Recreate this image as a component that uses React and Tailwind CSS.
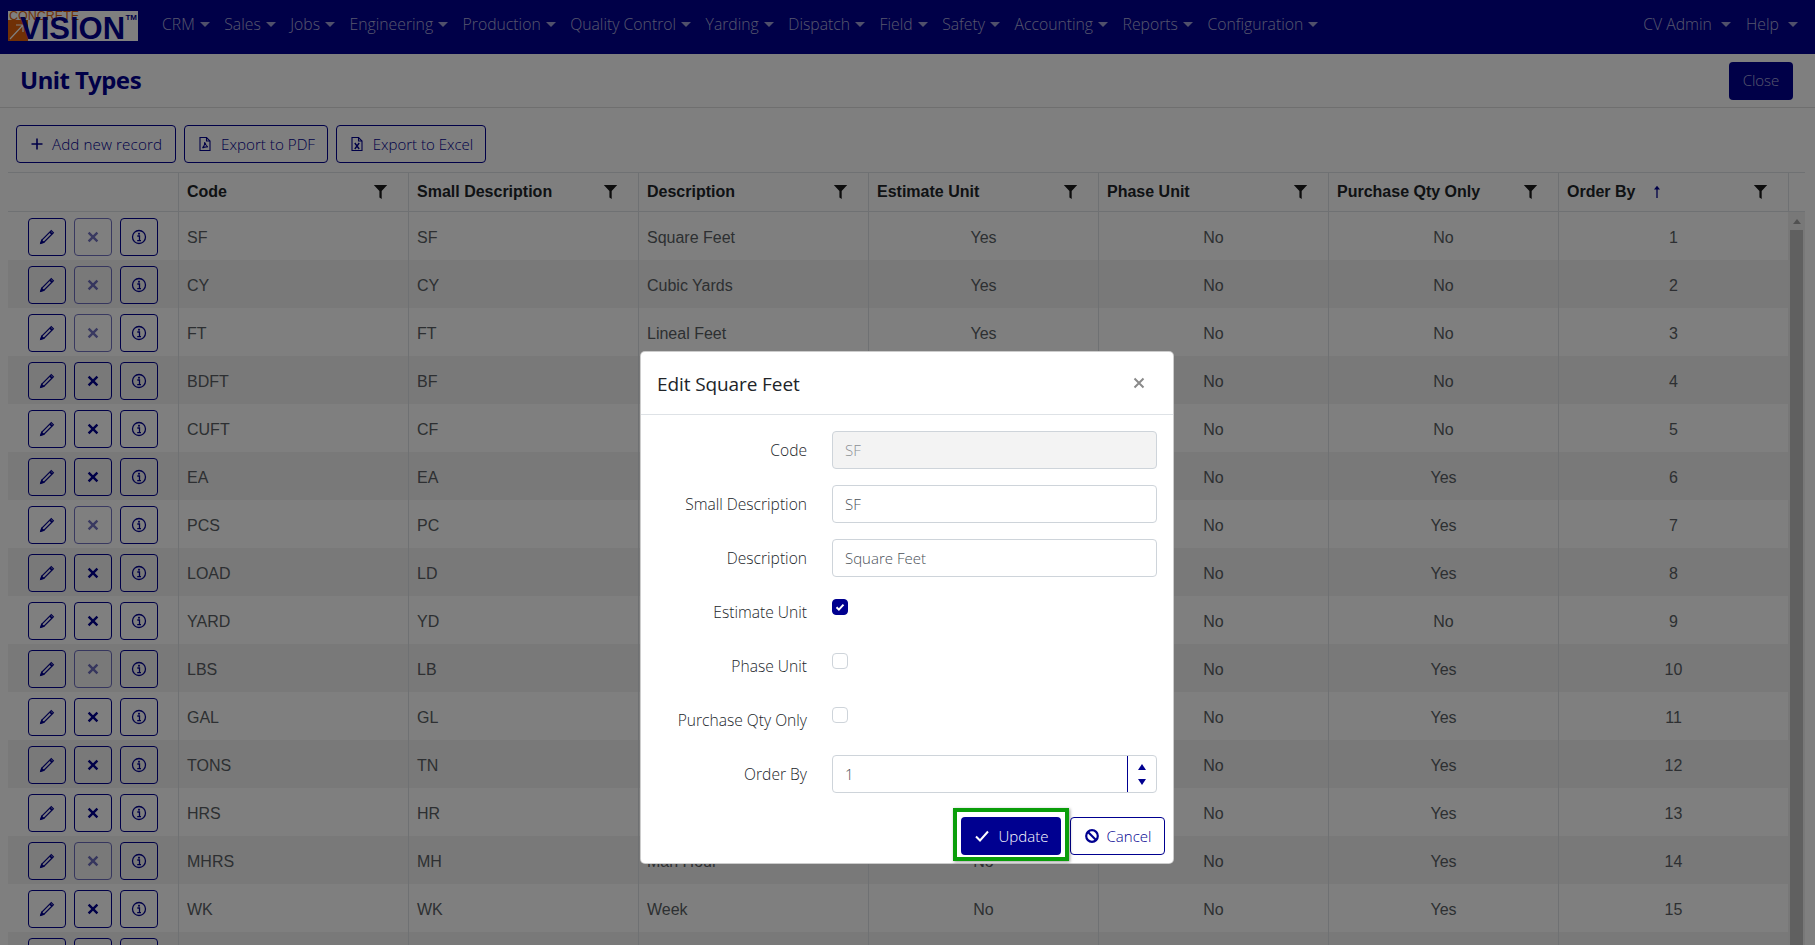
import React from "react";

const navItems = ["CRM","Sales","Jobs","Engineering","Production","Quality Control","Yarding","Dispatch","Field","Safety","Accounting","Reports","Configuration"];
const columns = ["Code","Small Description","Description","Estimate Unit","Phase Unit","Purchase Qty Only","Order By"];
const rows = [
  ["SF","SF","Square Feet","Yes","No","No",1,true],
  ["CY","CY","Cubic Yards","Yes","No","No",2,true],
  ["FT","FT","Lineal Feet","Yes","No","No",3,true],
  ["BDFT","BF","Board Feet","Yes","No","No",4,false],
  ["CUFT","CF","Cubic Feet","Yes","No","No",5,false],
  ["EA","EA","Each","Yes","No","Yes",6,false],
  ["PCS","PC","Pieces","Yes","No","Yes",7,true],
  ["LOAD","LD","Load","Yes","No","Yes",8,false],
  ["YARD","YD","Yard","Yes","No","No",9,false],
  ["LBS","LB","Pounds","Yes","No","Yes",10,true],
  ["GAL","GL","Gallons","Yes","No","Yes",11,false],
  ["TONS","TN","Tons","Yes","No","Yes",12,false],
  ["HRS","HR","Hour","No","No","Yes",13,false],
  ["MHRS","MH","Man Hour","No","No","Yes",14,true],
  ["WK","WK","Week","No","No","Yes",15,false],
  ["","","","","","",16,false],
];

const Caret = () => <span className="inline-block ml-[5px] w-0 h-0 border-x-[5px] border-x-transparent border-t-[5.5px] border-t-[#ffffffa0] relative top-[-3px]" />;
const Pencil = () => (
  <svg width="16" height="16" viewBox="0 0 16 16" fill="none" stroke="#000090" strokeWidth="1.200">
    <path d="M12.300 1.600l2.100 2.100L5.200 12.900l-3.300 1.200 1.200-3.300z" />
    <path d="M1.700 14.300l.9-3 2.100 2.100z" fill="#000090" />
    <path d="M11 3l2.100 2.100" strokeWidth="1.800" />
  </svg>
);
const XIcon = () => (
  <svg width="16" height="16" viewBox="0 0 16 16" stroke="#000090" strokeWidth="2.400"><path d="M3.600 3.600l8.800 8.800M12.400 3.600l-8.800 8.800" /></svg>
);
const Info = () => (
  <svg width="16" height="16" viewBox="0 0 16 16" fill="none" stroke="#000090">
    <circle cx="8" cy="8" r="6.500" strokeWidth="1.300" />
    <path d="M6.300 7h2.200v4.400M6.200 11.600h3.800" strokeWidth="1.300" />
    <rect x="7.100" y="3.800" width="1.800" height="1.800" fill="#000090" stroke="none" />
  </svg>
);
const Filter = () => (
  <svg width="15" height="16" viewBox="0 0 15 16" fill="#1a1a1a"><path d="M.8 1h13.400L8.700 7v8l-2.300-1.500V7z" /></svg>
);
const SortUp = () => (
  <svg width="12" height="14" viewBox="0 0 12 14" fill="none" stroke="#000090" strokeWidth="1.300"><path d="M6 13V2" /><path d="M6 .8L9 4.600H3z" fill="#000090" stroke="none" /></svg>
);
const Plus = () => (
  <svg width="14" height="14" viewBox="0 0 14 14" stroke="#000090" strokeWidth="1.600"><path d="M7 1.500v11M1.500 7h11" /></svg>
);
const FileIcon = ({ children }) => (
  <svg width="16" height="16" viewBox="0 0 16 16" fill="none" stroke="#000090" strokeWidth="1.100">
    <path d="M3 1.500h6.500L13 5v9.500H3z" />
    <path d="M9.500 1.500V5H13" />
    {children}
  </svg>
);

const ActionBtn = ({ children, faded }) => (
  <button className={`w-[38px] h-[38px] flex items-center justify-center rounded border border-[#000090] ${faded ? "opacity-55" : ""}`}>{children}</button>
);
const ToolBtn = ({ icon, label, w, size }) => (
  <button className={`h-[38px] ${w} ${size} flex items-center justify-center gap-[8px] rounded border border-[#000090] text-[#000090] font-light`}>
    {icon}<span>{label}</span>
  </button>
);

const Field = ({ label, children }) => (
  <div className="flex items-center h-[38px] mb-[16px]">
    <label className="w-[166px] text-right text-[15.600px] text-[#212529] font-light shrink-0 relative top-[1px]">{label}</label>
    <div className="ml-[25px] w-[325px]">{children}</div>
  </div>
);
const Input = ({ value, disabled }) => (
  <div className={`h-[38px] w-full border border-[#ced4da] rounded flex items-center px-[12px] text-[15px] font-light ${disabled ? "bg-[#f3f3f3] text-[#8a8f94]" : "bg-white text-[#495057]"}`}>{value}</div>
);
const Check = ({ on }) => (
  <div className="h-[38px] flex items-start pt-[6px]">
    <div className={`w-[16px] h-[16px] rounded-[4px] border flex items-center justify-center ${on ? "bg-[#000090] border-[#000090]" : "bg-white border-[#ced4da]"}`}>
      {on && <svg width="10" height="10" viewBox="0 0 10 10" fill="none" stroke="#fff" strokeWidth="2"><path d="M1.500 5.200l2.400 2.400 4.600-5" /></svg>}
    </div>
  </div>
);

export default function App() {
  return (
    <div className="relative h-screen overflow-hidden bg-white font-['Open_Sans',sans-serif]">
      <nav className="h-[54px] bg-[#000090] flex items-center pl-[8px] pr-[17px]">
        <div className="relative w-[130px] h-[30px] bg-white overflow-hidden shrink-0 top-[-1px]">
          <div className="absolute left-0 top-[9px] w-[20px] h-[21px] bg-[#e0600c]">
            <svg width="20" height="21" viewBox="0 0 20 21" fill="none" stroke="#fff" strokeWidth="1.200"><path d="M2 19L15 5M8 5h7v7" /></svg>
          </div>
          <span className="absolute left-[1px] top-[-2px] text-[12.500px] leading-[14px] text-[#e0600c] font-['Liberation_Sans',sans-serif]">CONCRETE</span>
          <span className="absolute left-[12px] top-[3px] text-[31px] leading-[30px] font-bold text-[#000090] font-['Liberation_Sans',sans-serif]">VISION</span>
          <span className="absolute right-[1px] top-[2px] text-[8px] leading-[10px] font-bold text-[#000090] font-['Liberation_Sans',sans-serif]">TM</span>
        </div>
        <div className="flex ml-[24px] gap-[14.500px] pb-[4px] text-[15.750px] font-light text-[#ffffffb0]">
          {navItems.map((n) => <span key={n} className="whitespace-nowrap">{n}<Caret /></span>)}
        </div>
        <div className="ml-auto flex gap-[15px] pb-[4px] text-[15.750px] font-light text-[#ffffffb0]">
          <span>CV Admin <Caret /></span>
          <span>Help <Caret /></span>
        </div>
      </nav>

      <div className="h-[54px] border-b border-[#dedede] flex items-center justify-between pl-[20px] pr-[22px]">
        <h1 className="text-[24px] font-bold text-[#000090] font-['Noto_Sans',sans-serif] tracking-[-0.5px] relative top-[-1px]">Unit Types</h1>
        <button className="w-[64px] h-[38px] rounded bg-[#000090] text-[#ffffffb0] text-[15px] font-light">Close</button>
      </div>

      <div className="flex gap-[8px] pl-[16px] pt-[17px] pb-[9px]">
        <ToolBtn w="w-[160px]" size="text-[15.200px] tracking-[0.1px]" label="Add new record" icon={<Plus />} />
        <ToolBtn w="w-[144px]" size="text-[15.200px]" label="Export to PDF" icon={<FileIcon><path d="M5.500 12c2-2 2.500-4 2.300-6 .5 2.500 1.500 4 3 5-2-.5-3.500 0-5.300 1z" /></FileIcon>} />
        <ToolBtn w="w-[150px]" size="text-[15px]" label="Export to Excel" icon={<FileIcon><path d="M5.800 7l4.400 6M10.200 7l-4.400 6" strokeWidth="1.400" /></FileIcon>} />
      </div>

      <div className="ml-[8px] mr-[10px] font-['Liberation_Sans',sans-serif]">
        <div className="flex h-[40px] border-y border-[#dee2e6] text-[16px] font-bold text-[#212529]">
          <div className="w-[170px]" />
          {columns.map((c) => (
            <div key={c} className="w-[230px] border-l border-[#dee2e6] flex items-center pl-[8px] pr-[20px]">
              <span>{c}</span>
              {c === "Order By" && <span className="ml-[16px] flex"><SortUp /></span>}
              <span className="ml-auto flex"><Filter /></span>
            </div>
          ))}
          <div className="flex-1 border-l border-[#dee2e6]" />
        </div>
        <div className="flex">
          <div className="w-[1780px] shrink-0">
            {rows.map((r, i) => (
              <div key={r[6]} className={`flex h-[48px] text-[16px] text-[#5a5f64] ${i % 2 ? "bg-[#f2f2f2]" : ""}`}>
                <div className="w-[170px] flex gap-[8px] pl-[20px] pt-[6px]">
                  <ActionBtn><Pencil /></ActionBtn>
                  <ActionBtn faded={r[7]}><XIcon /></ActionBtn>
                  <ActionBtn><Info /></ActionBtn>
                </div>
                {r.slice(0, 7).map((v, j) => (
                  <div key={j} className={`w-[230px] border-l border-[#dee2e6] flex items-center px-[8px] pt-[4px] ${j > 2 ? "justify-center" : ""}`}>{i === 15 ? "" : v}</div>
                ))}
              </div>
            ))}
          </div>
          <div className="w-[17px] bg-[#f1f1f1] shrink-0">
            <div className="h-[18px] flex items-center justify-center">
              <span className="w-0 h-0 border-x-[4px] border-x-transparent border-b-[5px] border-b-[#a3a3a3]" />
            </div>
            <div className="mx-[2px] h-[800px] bg-[#c1c1c1]" />
          </div>
        </div>
      </div>

      <div className="absolute inset-0 bg-black/50" />

      <div className="absolute left-[640px] top-[351px] w-[534px] h-[513px] bg-white rounded-[5px] border border-[#00000033]">
        <div className="relative h-[63px] border-b border-[#dee2e6] flex items-center pl-[16px]">
          <h2 className="text-[19px] text-[#212529] tracking-[-0.1px] relative top-[1px]">Edit Square Feet</h2>
          <span className="absolute right-[28px] top-[25px] flex">
            <svg width="12" height="12" viewBox="0 0 12 12" stroke="#8a8a8a" strokeWidth="2"><path d="M1.500 1.500l9 9M10.500 1.500l-9 9" /></svg>
          </span>
        </div>
        <div className="pt-[16px]">
          <Field label="Code"><Input value="SF" disabled /></Field>
          <Field label="Small Description"><Input value="SF" /></Field>
          <Field label="Description"><Input value="Square Feet" /></Field>
          <Field label="Estimate Unit"><Check on /></Field>
          <Field label="Phase Unit"><Check /></Field>
          <Field label="Purchase Qty Only"><Check /></Field>
          <Field label="Order By">
            <div className="h-[38px] w-full border border-[#ced4da] rounded flex items-center text-[15px] font-light text-[#495057]">
              <span className="pl-[12px] flex-1">1</span>
              <div className="w-[29px] h-full border-l border-[#000090] flex flex-col items-center justify-center gap-[9px]">
                <span className="w-0 h-0 border-x-[4px] border-x-transparent border-b-[6px] border-b-[#000090]" />
                <span className="w-0 h-0 border-x-[4px] border-x-transparent border-t-[6px] border-t-[#000090]" />
              </div>
            </div>
          </Field>
        </div>
        <div className="absolute right-[8px] bottom-[8px] flex gap-[9px]">
          <div className="relative">
            <button className="w-[100px] h-[38px] rounded bg-[#000090] text-white text-[15px] font-light flex items-center justify-center gap-[9px]">
              <svg width="16" height="16" viewBox="0 0 16 16" fill="none" stroke="#fff" strokeWidth="2"><path d="M2 8.500l4 4 8-9" /></svg>
              Update
            </button>
            <div className="absolute left-[-8px] right-[-8px] top-[-9px] bottom-[-6px] border-[4px] border-[#0a9e0a] shadow-[1px_1px_3px_#0006]" />
          </div>
          <button className="w-[95px] h-[38px] rounded border border-[#000090] bg-white text-[#000090] text-[15px] font-light flex items-center justify-center gap-[7px]">
            <svg width="16" height="16" viewBox="0 0 16 16" fill="none" stroke="#000090" strokeWidth="2.200"><circle cx="8" cy="8" r="5.800" /><path d="M4 4l8 8" /></svg>
            Cancel
          </button>
        </div>
      </div>
    </div>
  );
}
